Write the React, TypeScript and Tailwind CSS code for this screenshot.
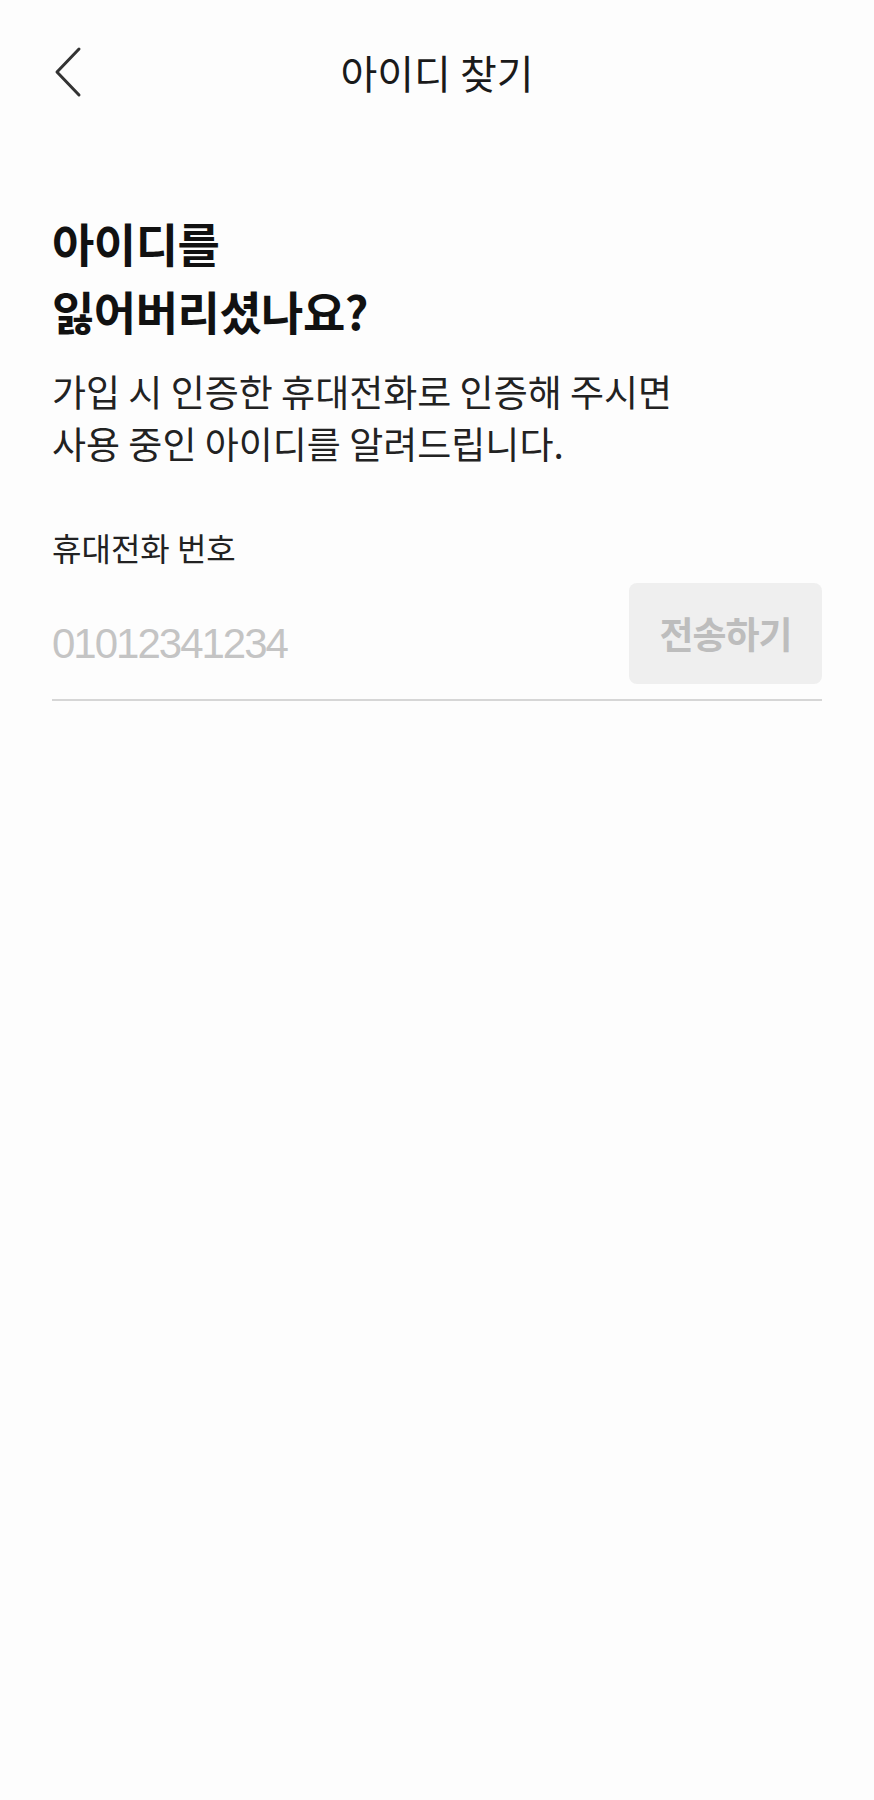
import { useState } from "react"

const kr = "font-['Noto_Sans_CJK_KR',sans-serif]"

function BackIcon() {
  return (
    <svg width="30" height="52" viewBox="0 0 30 52" fill="none">
      <path d="M27 3 L5 26 L27 49" stroke="#333333" strokeWidth="3" strokeLinecap="round" strokeLinejoin="round" />
    </svg>
  )
}

export default function App() {
  const [phone, setPhone] = useState("")

  return (
    <div className={`min-h-[1800px] w-full bg-[#fdfdfd] ${kr}`}>
      <header className="grid h-[144px] grid-cols-[1fr_auto_1fr] items-center px-[52px]">
        <button className="flex w-[40px] items-center">
          <BackIcon />
        </button>
        <h1 className="text-[40px] leading-none font-normal text-[#1a1a1a]">아이디 찾기</h1>
        <div />
      </header>

      <main className="px-[52px]">
        <h2 className="mt-[64px] text-[46px] leading-[68px] font-bold tracking-[-0.5px] text-[#111111]">
          아이디를
          <br />
          잃어버리셨나요?
        </h2>

        <p className="mt-[21px] text-[37px] leading-[52px] text-[#222222]">
          가입 시 인증한 휴대전화로 인증해 주시면
          <br />
          사용 중인 아이디를 알려드립니다.
        </p>

        <label className="mt-[58px] block text-[32px] leading-[40px] text-[#222222]">휴대전화 번호</label>

        <div className="mt-[16px] flex items-center border-b-2 border-[#d6d6d6] pb-[15px]">
          <div className="flex-1 pt-5">
            <input
              value={phone}
              onChange={(e) => setPhone(e.target.value)}
              placeholder="01012341234"
              className="w-full bg-transparent font-['Liberation_Sans',Arial,sans-serif] text-[42px] leading-[50px] tracking-[-2px] text-[#222222] outline-none placeholder:text-[#c4c4c4]"
            />
          </div>
          <button
            disabled
            className="flex h-[101px] w-[193px] items-center justify-center rounded-[8px] bg-[#efefef] text-[37px] font-bold tracking-[-1px] text-[#bdbdbd]"
          >
            전송하기
          </button>
        </div>
      </main>
    </div>
  )
}
